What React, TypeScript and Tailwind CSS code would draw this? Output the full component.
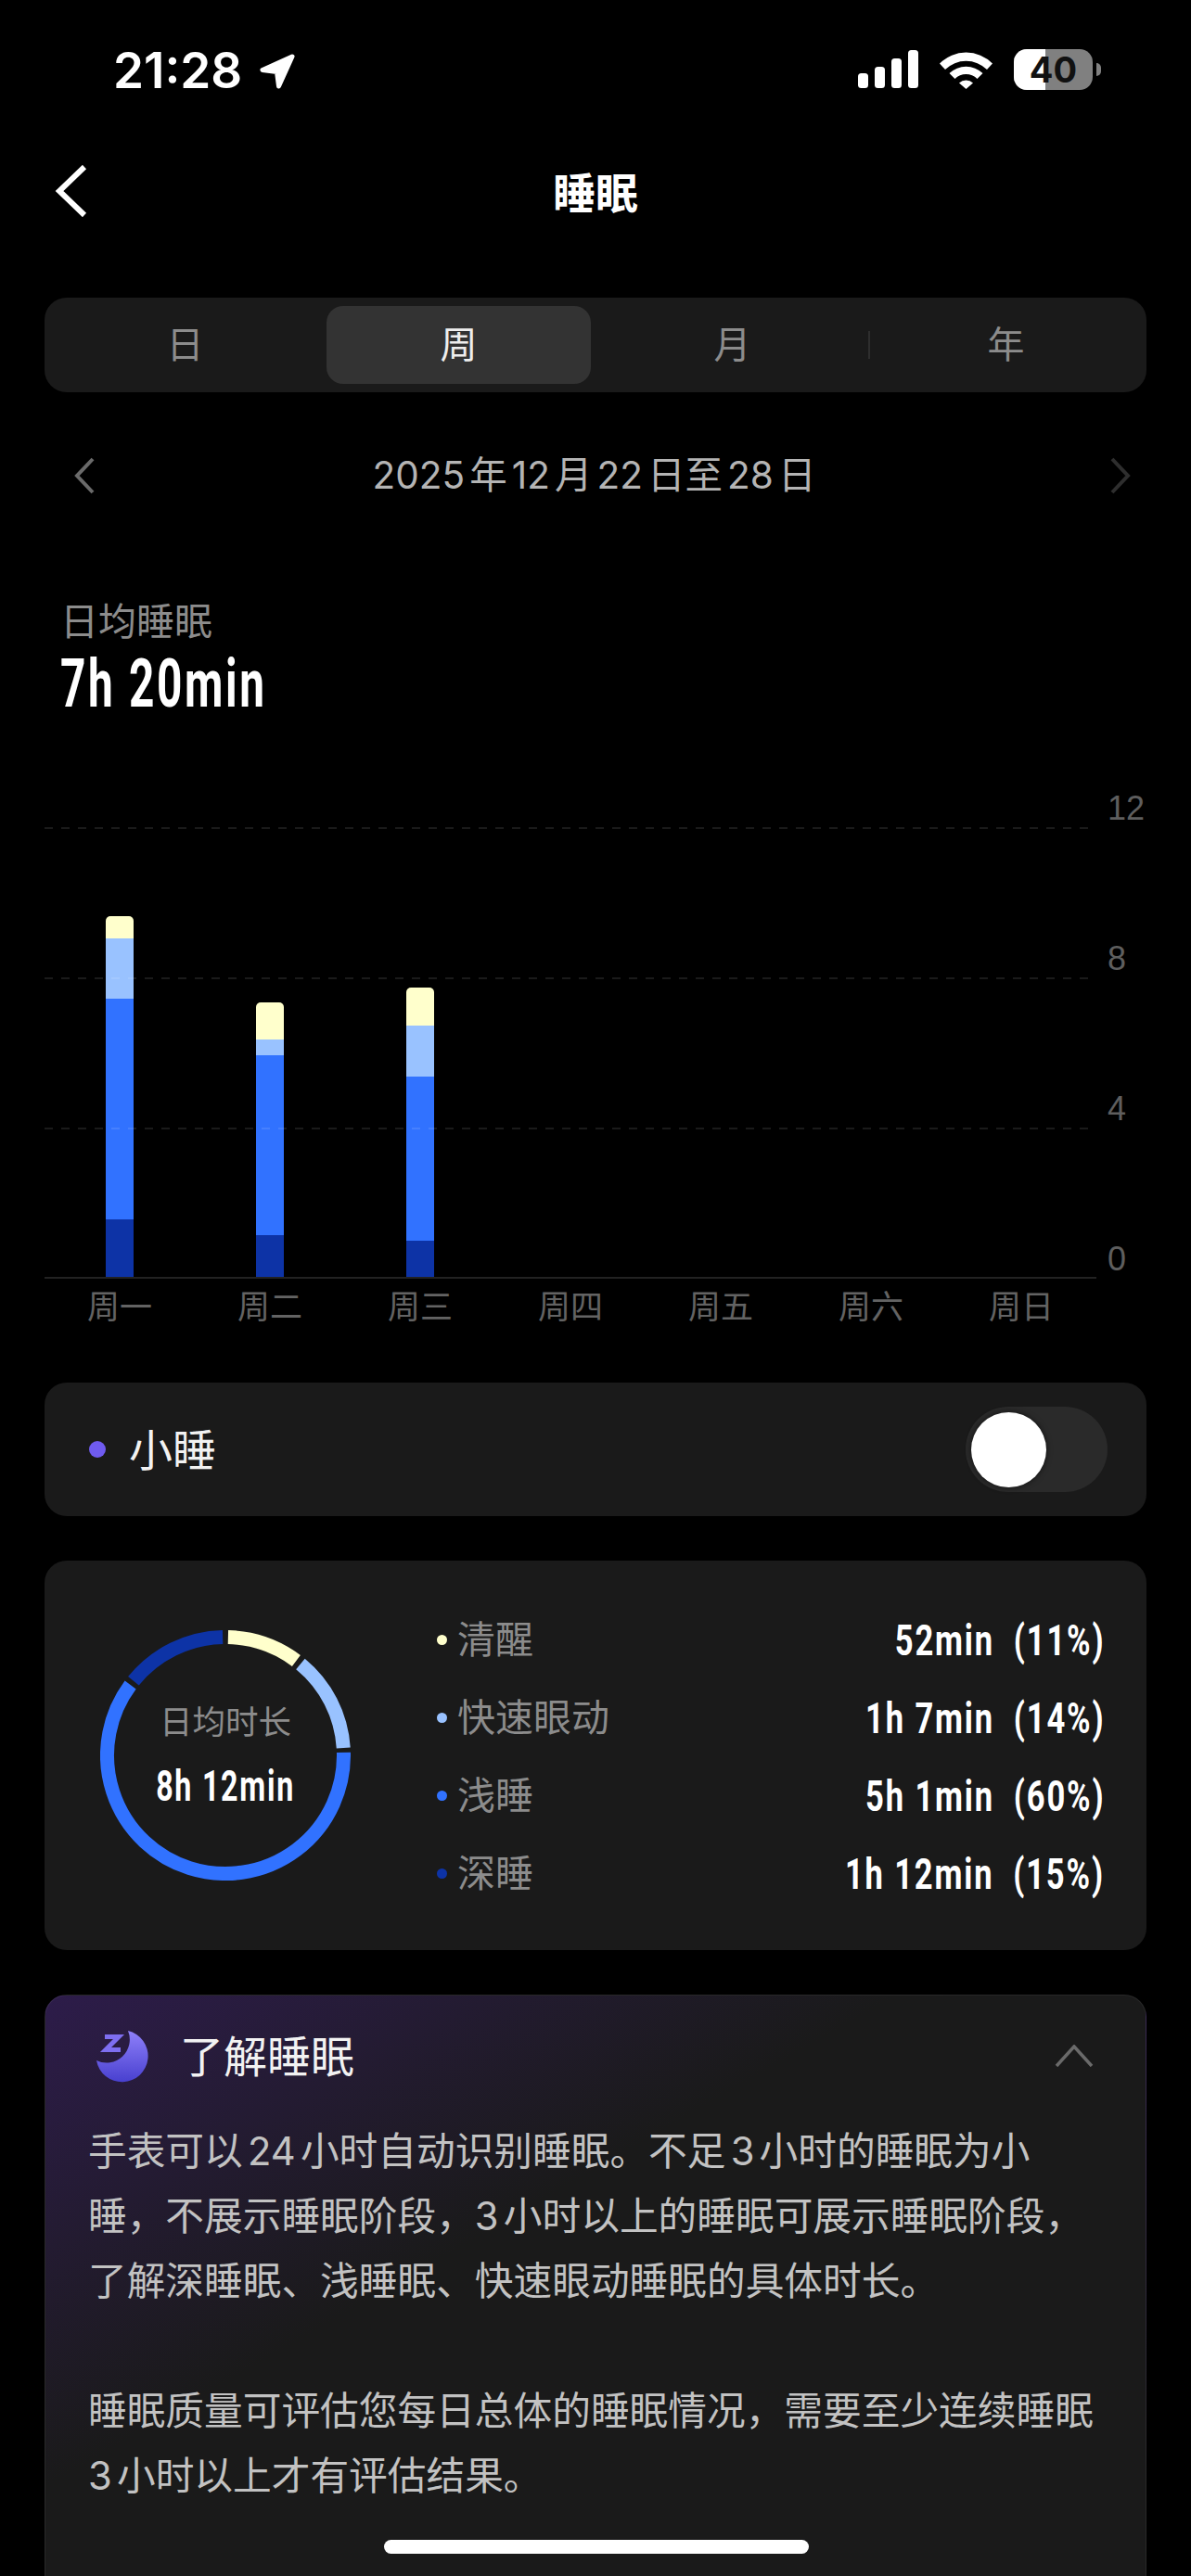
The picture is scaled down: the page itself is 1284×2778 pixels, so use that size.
import React from "react";

const cond = "font-['Roboto',sans-serif] font-bold inline-block whitespace-pre";

function polar(r: number, deg: number) {
  const a = ((deg - 90) * Math.PI) / 180;
  return `${135 + r * Math.cos(a)} ${135 + r * Math.sin(a)}`;
}
function arc(a: number, b: number) {
  const r = 127.5;
  return `M${polar(r, a)} A${r} ${r} 0 ${b - a > 180 ? 1 : 0} 1 ${polar(r, b)}`;
}

function StatusBar() {
  return (
    <div className="h-[156px] pt-[50px] pl-[122px] pr-[97px] flex justify-between items-start">
      <div className="flex items-center gap-[17px] h-[52px]">
        <span className="text-[53px] font-semibold text-white leading-none">21:28</span>
        <svg width="42" height="41" viewBox="0 0 42 41" fill="white" stroke="white" strokeWidth="5" strokeLinejoin="round">
          <path d="M37 5 L5 19.5 L20.5 21.5 L22.5 37 Z" />
        </svg>
      </div>
      <div className="flex items-center h-[52px] mt-[-1px]">
        <svg width="65" height="42" viewBox="0 0 65 42" fill="white">
          <rect x="0" y="25" width="11" height="16" rx="3.5" />
          <rect x="18" y="18" width="11" height="23" rx="3.5" />
          <rect x="36" y="9" width="11" height="32" rx="3.5" />
          <rect x="54" y="0" width="11" height="41" rx="3.5" />
        </svg>
        <svg className="ml-[23px]" width="57" height="42" viewBox="0 0 57 42" fill="white">
          <path d="M0 14.5 A40 40 0 0 1 57 14.5 L51 21 A32 32 0 0 0 6 21 Z" />
          <path d="M10.5 25 A26 26 0 0 1 46.5 25 L40.5 31 A17 17 0 0 0 16.5 31 Z" />
          <path d="M21 35.5 A11 11 0 0 1 36 35.5 L28.5 42 Z" />
        </svg>
        <div className="ml-[23px] relative w-[85px] h-[44px] rounded-[14px] overflow-hidden flex bg-[#808080]">
          <div className="w-[34px] bg-white" />
          <span className="absolute inset-0 flex items-center justify-center text-[38px] font-bold leading-none text-[#111]">40</span>
        </div>
        <div className="ml-[4px] w-[5px] h-[14px] rounded-r-full bg-[#808080]" />
      </div>
    </div>
  );
}

function Nav() {
  return (
    <div className="relative h-[104px] flex items-center justify-center">
      <svg className="absolute left-[58px] top-[22px]" width="36" height="56" viewBox="0 0 36 56" fill="none" stroke="white" strokeWidth="6">
        <path d="M33 2 L6 28 L33 54" />
      </svg>
      <span className="text-[46px] font-bold text-white leading-none">睡眠</span>
    </div>
  );
}

function Segments() {
  const items = ["日", "周", "月", "年"];
  return (
    <div className="mt-[61px] mx-[48px] h-[102px] rounded-[24px] bg-[#1a1a1a] px-[4px] py-[9px] grid grid-cols-4 relative">
      {items.map((t, i) => (
        <div key={t} className={i === 1 ? "mx-[5px] rounded-[18px] bg-[#333333] flex items-center justify-center text-[40px] text-[#eeeeee]" : "flex items-center justify-center text-[40px] text-[#8c8c8c]"}>
          {t}
        </div>
      ))}
      <div className="absolute left-[888px] top-[36px] w-[2px] h-[30px] bg-[#2e2e2e]" />
    </div>
  );
}

function DateRow() {
  return (
    <div className="mt-[40px] h-[100px] flex items-center justify-between pl-[79px] pr-[64px]">
      <svg width="24" height="40" viewBox="0 0 24 40" fill="none" stroke="#6a6a6a" strokeWidth="4"><path d="M21 2 L4 20 L21 38" /></svg>
      <span className="mr-[18px] text-[40.5px] text-[#b4b4b4] leading-none [text-autospace:normal]">2025年12月22日至28日</span>
      <svg width="24" height="40" viewBox="0 0 24 40" fill="none" stroke="#2e2e2e" strokeWidth="4"><path d="M3 2 L20 20 L3 38" /></svg>
    </div>
  );
}

const bars = [
  [24, 65, 238, 62],
  [40, 17, 194, 45],
  [41, 55, 177, 39],
];
const days = ["周一", "周二", "周三", "周四", "周五", "周六", "周日"];
const colors = ["bg-[#ffffcc]", "bg-[#99c2ff]", "bg-[#3172ff]", "bg-[#0d33a6]"];
const dash = "h-[2px] w-[1125px] bg-[repeating-linear-gradient(90deg,rgba(255,255,255,0.1)_0_9px,transparent_9px_18px)]";

function Chart() {
  return (
    <div className="mx-[48px] mt-[114px]">
      <div className="relative h-[485px]">
        <div className="absolute left-0 bottom-0 w-[1134px] h-[389px] grid grid-cols-7 items-end">
          {days.map((d, i) => (
            <div key={d} className="flex justify-center">
              {bars[i] && (
                <div className="w-[30px] rounded-t-[5px] overflow-hidden flex flex-col">
                  {bars[i].map((h, j) => (
                    <div key={j} className={colors[j]} style={{ height: h }} />
                  ))}
                </div>
              )}
            </div>
          ))}
        </div>
        <div className="relative flex flex-col">
          <div className="h-[162px]"><div className={dash} /></div>
          <div className="h-[162px]"><div className={dash} /></div>
          <div className="h-[162px]"><div className={dash} /></div>
        </div>
        {[["12", 0], ["8", 162], ["4", 324], ["0", 486]].map(([t, y]) => (
          <span key={t as string} className="absolute left-[1146px] text-[36px] leading-[40px] text-[#5e5e5e] font-['Liberation_Sans',sans-serif]" style={{ top: (y as number) - 40 }}>
            {t}
          </span>
        ))}
      </div>
      <div className="h-[2px] w-[1134px] bg-[#222222]" />
      <div className="w-[1134px] h-[60px] grid grid-cols-7">
        {days.map((d) => (
          <div key={d} className="flex items-center justify-center text-[35px] text-[#636363]">{d}</div>
        ))}
      </div>
    </div>
  );
}

function NapCard() {
  return (
    <div className="mt-[52px] mx-[48px] h-[144px] rounded-[24px] bg-[#1a1a1a] flex items-center pl-[48px] pr-[42px]">
      <div className="w-[18px] h-[18px] rounded-full bg-[#6f5bf0]" />
      <span className="ml-[25px] text-[47px] text-[#f2f2f2] leading-none">小睡</span>
      <div className="ml-auto w-[153px] h-[92px] rounded-full bg-[#2a2a2a] flex items-center pl-[6px]">
        <div className="w-[81px] h-[81px] rounded-full bg-white shadow-[0_0_6px_rgba(0,0,0,0.6)]" />
      </div>
    </div>
  );
}

const legend = [
  ["清醒", "52min  (11%)", "bg-[#ffffcc]"],
  ["快速眼动", "1h 7min  (14%)", "bg-[#99c2ff]"],
  ["浅睡", "5h 1min  (60%)", "bg-[#3172ff]"],
  ["深睡", "1h 12min  (15%)", "bg-[#0d33a6]"],
];

function StatsCard() {
  return (
    <div className="mt-[48px] mx-[48px] h-[420px] rounded-[24px] bg-[#1a1a1a] flex items-center pl-[60px] pr-[45px]">
      <div className="relative w-[270px] h-[270px] shrink-0">
        <svg width="270" height="270" viewBox="0 0 270 270" fill="none" strokeWidth="15">
          <path d={arc(1.3, 36.8)} stroke="#ffffcc" />
          <path d={arc(39.4, 86.4)} stroke="#99c2ff" />
          <path d={arc(88.6, 306.6)} stroke="#3172ff" />
          <path d={arc(309, 358.7)} stroke="#0d33a6" />
        </svg>
        <div className="absolute inset-0 flex flex-col items-center">
          <span className="mt-[78px] text-[35.5px] leading-[44px] text-[#8c8c8c]">日均时长</span>
          <span className={`mt-[21px] text-[46px] leading-[50px] tracking-[2.5px] text-white scale-x-[0.7] ${cond}`}>8h 12min</span>
        </div>
      </div>
      <div className="ml-[93px] flex-1 flex flex-col pt-[2px]">
        {legend.map(([a, b, col]) => (
          <div key={a} className="h-[84px] flex items-center">
            <div className={`w-[11px] h-[11px] rounded-full ${col}`} />
            <span className="ml-[11px] text-[41px] text-[#8c8c8c] leading-none">{a}</span>
            <span className={`ml-auto text-[47px] leading-none tracking-[2.5px] text-white origin-right scale-x-[0.735] ${cond}`}>{b}</span>
          </div>
        ))}
      </div>
    </div>
  );
}

function InfoCard() {
  const lines = [
    "手表可以24小时自动识别睡眠。不足3小时的睡眠为小",
    "睡，不展示睡眠阶段，3小时以上的睡眠可展示睡眠阶段，",
    "了解深睡眠、浅睡眠、快速眼动睡眠的具体时长。",
    "\u00a0",
    "睡眠质量可评估您每日总体的睡眠情况，需要至少连续睡眠",
    "3小时以上才有评估结果。",
  ];
  return (
    <div className="mt-[48px] mx-[48px] h-[640px] rounded-t-[24px] border border-[#ffffff10] border-b-0 bg-[linear-gradient(150deg,#2d1c4a_0%,#1a1a1a_40%)]">
      <div className="h-[130px] flex items-center pl-[55px] pr-[56px]">
        <svg width="56" height="57" viewBox="0 0 56 57">
          <defs>
            <linearGradient id="moon" x1="0" y1="0" x2="0" y2="1">
              <stop offset="0%" stopColor="#8f80fa" />
              <stop offset="100%" stopColor="#4840cf" />
            </linearGradient>
          </defs>
          <path d="M34 1 A28 28 0 1 1 0 33 A25 25 0 0 0 34 1 Z" fill="url(#moon)" />
          <path d="M9 7.5 H24 L10 21.5 H26" fill="none" stroke="#7e6ef0" strokeWidth="5" />
        </svg>
        <span className="ml-[34px] text-[47px] text-[#f2f2f2] leading-none">了解睡眠</span>
        <svg className="ml-auto" width="42" height="24" viewBox="0 0 42 24" fill="none" stroke="#6a6a6a" strokeWidth="3.5"><path d="M2 23 L21 2 L40 23" /></svg>
      </div>
      <div className="mt-[3px] pl-[46px] text-[41.7px] leading-[70px] text-[#c2c2c2] whitespace-nowrap [text-autospace:normal]">
        {lines.map((l, i) => (
          <div key={i}>{l}</div>
        ))}
      </div>
    </div>
  );
}

export default function App() {
  return (
    <div className="relative w-[1284px] h-[2778px] overflow-hidden bg-black font-['Inter','Noto_Sans_CJK_SC',sans-serif]">
      <StatusBar />
      <Nav />
      <Segments />
      <DateRow />
      <div className="mt-[79px] pl-[65px]">
        <div className="text-[41px] leading-[56px] text-[#8c8c8c]">日均睡眠</div>
        <div className={`text-[72px] leading-[80px] tracking-[4px] text-white origin-left scale-x-[0.663] ${cond}`}>7h 20min</div>
      </div>
      <Chart />
      <NapCard />
      <StatsCard />
      <InfoCard />
      <div className="absolute left-[414px] top-[2739px] w-[458px] h-[15px] rounded-full bg-white" />
    </div>
  );
}
